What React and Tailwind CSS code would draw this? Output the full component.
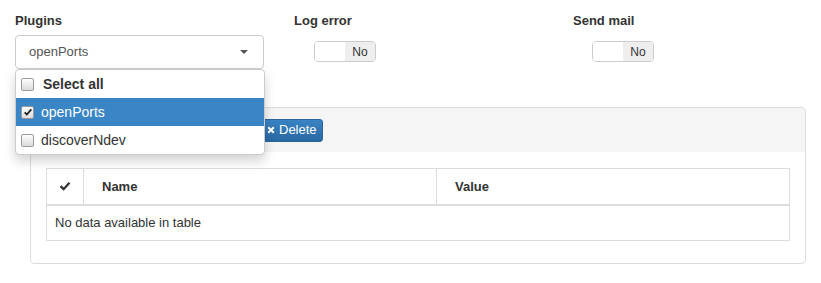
import { useState } from "react";

const font = { fontFamily: '"Liberation Sans", Arial, sans-serif' };

function Box({ checked }) {
  return (
    <span className="w-[13px] h-[13px] rounded-[2px] border border-[#9a9a9a] bg-gradient-to-b from-[#fdfdfd] to-[#dcdcdc] flex items-center justify-center shrink-0">
      {checked && (
        <svg viewBox="0 0 12 12" className="w-[10px] h-[10px]">
          <path d="M2 6.5 L4.6 9 L10 2.8" fill="none" stroke="#222" strokeWidth="2.2" />
        </svg>
      )}
    </span>
  );
}

function Toggle() {
  return (
    <div className="flex w-[62px] h-[21px] rounded-[4px] border border-[#ccc] overflow-hidden text-[12px] text-[#333]">
      <span className="w-[31px] bg-white" />
      <span className="w-[31px] bg-[#eee] flex items-center justify-center">No</span>
    </div>
  );
}

export default function App() {
  const [open] = useState(true);
  const items = [
    { label: "Select all", bold: true, checked: false },
    { label: "openPorts", active: true, checked: true },
    { label: "discoverNdev", checked: false },
  ];

  return (
    <div className="w-[821px] h-[283px] bg-white text-[#333] overflow-hidden" style={font}>
      {/* top row */}
      <div className="grid grid-cols-[279px_279px_263px] pt-[12px]">
        <div className="px-[15px]">
          <div className="text-[13px] font-bold leading-[18px] mb-[5px]">Plugins</div>
          <div className="relative">
            <div className="h-[34px] w-[249px] rounded-[4px] border border-[#ccc] flex items-center justify-between pl-[13px] pr-[15px] text-[13px] text-[#555]">
              <span>openPorts</span>
              <span className="w-0 h-0 border-l-[4px] border-r-[4px] border-t-[4px] border-l-transparent border-r-transparent border-t-[#555]" />
            </div>
            {open && (
              <div className="absolute left-0 top-[34px] w-[250px] z-10 bg-white border border-[#ccc] rounded-[4px] shadow-[0_6px_12px_rgba(0,0,0,0.175)] overflow-hidden">
                {items.map((it) => (
                  <div
                    key={it.label}
                    className={`h-[28px] flex items-center gap-[8px] pl-[5px] text-[14px] ${
                      it.active ? "bg-[#3a85c6] text-white" : "text-[#333]"
                    } ${it.bold ? "font-bold" : ""}`}
                  >
                    <Box checked={it.checked} />
                    <span className={it.bold ? "ml-[1px]" : "-ml-[1px]"}>{it.label}</span>
                  </div>
                ))}
              </div>
            )}
          </div>
        </div>
        <div className="px-[15px]">
          <div className="text-[13px] font-bold leading-[18px]">Log error</div>
          <div className="mt-[11px] ml-[20px]">
            <Toggle />
          </div>
        </div>
        <div className="px-[15px]">
          <div className="text-[13px] font-bold leading-[18px]">Send mail</div>
          <div className="mt-[11px] ml-[19px]">
            <Toggle />
          </div>
        </div>
      </div>

      {/* panel */}
      <div className="mt-[38px] ml-[30px] mr-[15px] border border-[#ddd] rounded-[4px]">
        <div className="h-[44px] bg-[#f5f5f5] flex items-center px-[15px] rounded-t-[4px]">
          <div className="flex">
            {/* buttons hidden under the open dropdown */}
            <button aria-label="Add" className="w-[108px] h-[23px] bg-[#337ab7] border border-[#2e6da4] rounded-l-[3px]" />
            <button aria-label="Edit" className="w-[107px] h-[23px] bg-[#337ab7] border border-[#2e6da4]" />
            <button className="h-[23px] px-[5px] bg-gradient-to-b from-[#3a84c3] to-[#2a68a3] border border-[#2b669a] text-white text-[13px] rounded-r-[3px] flex items-center gap-[4px]">
              <svg viewBox="0 0 10 10" className="w-[8px] h-[8px]">
                <path d="M1.5 1.5 L8.5 8.5 M8.5 1.5 L1.5 8.5" stroke="#fff" strokeWidth="2.6" />
              </svg>
              Delete
            </button>
          </div>
        </div>
        <div className="px-[15px] pt-[16px] pb-[22px]">
          <table className="w-full border-collapse border border-[#ddd] text-[13px]">
            <thead>
              <tr className="h-[36px] border-b-2 border-[#ddd]">
                <th className="w-[37px] border-r border-[#ddd]">
                  <svg viewBox="0 0 12 12" className="w-[12px] h-[12px] mx-auto">
                    <path d="M1.5 6.2 L4.6 9.2 L10.5 2.8" fill="none" stroke="#333" strokeWidth="2.3" />
                  </svg>
                </th>
                <th className="w-[353px] text-left font-bold pl-[18px] border-r border-[#ddd]">Name</th>
                <th className="text-left font-bold pl-[18px]">Value</th>
              </tr>
            </thead>
            <tbody>
              <tr className="h-[36px]">
                <td colSpan={3} className="pl-[8px]">No data available in table</td>
              </tr>
            </tbody>
          </table>
        </div>
      </div>
    </div>
  );
}
